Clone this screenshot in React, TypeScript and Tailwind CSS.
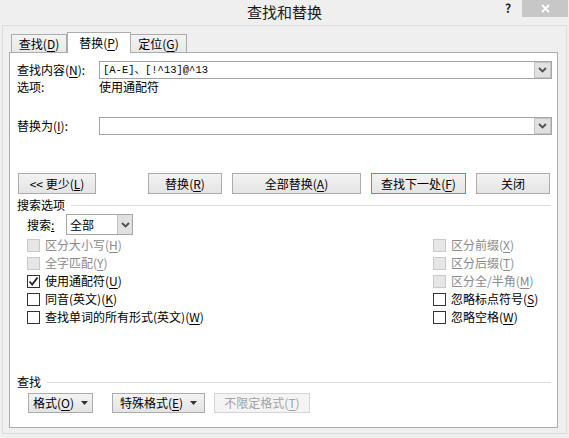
import React from 'react';

const FONT = "font-['Noto_Sans_CJK_SC','Noto_Sans',sans-serif]";

function Acc({ pre, k, post = '' }: { pre: string; k: string; post?: string }) {
  return (
    <span>
      {pre}(<u className="underline-offset-2">{k}</u>){post}
    </span>
  );
}

function Chevron() {
  return (
    <svg width="9" height="6" viewBox="0 0 9 6">
      <path d="M1 1 L4.5 4.5 L8 1" fill="none" stroke="#505050" strokeWidth="1.8" />
    </svg>
  );
}

function Caret() {
  return (
    <svg width="7" height="4" viewBox="0 0 7 4" className="ml-[7px]">
      <path d="M0 0 H7 L3.5 4 Z" fill="#333" />
    </svg>
  );
}

function Btn({
  w,
  className = '',
  children,
  primary,
  disabled,
}: {
  w: string;
  className?: string;
  children: React.ReactNode;
  primary?: boolean;
  disabled?: boolean;
}) {
  return (
    <div
      className={[
        'h-full flex items-center justify-center border shrink-0 leading-none',
        w,
        className,
        disabled
          ? 'bg-[#f4f4f4] border-[#d5d5d5] text-[#a2a2a2]'
          : 'bg-gradient-to-b from-[#f3f3f3] to-[#e4e4e4] text-black',
        !disabled && (primary ? 'border-[#3c9bf0]' : 'border-[#acacac]'),
      ].join(' ')}
    >
      {children}
    </div>
  );
}

function Combo({ text, mono }: { text?: string; mono?: boolean }) {
  return (
    <div className="flex-1 h-[18px] border border-[#a5a5a5] bg-white flex items-center">
      <span
        className={
          'flex-1 pl-[3px] leading-none ' +
          (mono ? "font-['Liberation_Mono','Noto_Sans_CJK_SC',monospace] text-[10.5px]" : '')
        }
      >
        {text}
      </span>
      <div className="w-[17px] h-[16px] bg-[#e1e1e1] border border-[#c4c4c4] flex items-center justify-center">
        <Chevron />
      </div>
    </div>
  );
}

function Check({
  label,
  checked,
  disabled,
}: {
  label: React.ReactNode;
  checked?: boolean;
  disabled?: boolean;
}) {
  return (
    <div className="h-[18px] flex items-center">
      <div
        className={[
          'w-[13px] h-[13px] border flex items-center justify-center shrink-0',
          disabled ? 'bg-[#e6e6e6] border-[#c9c9c9]' : 'bg-white border-[#333333]',
        ].join(' ')}
      >
        {checked && (
          <svg width="11" height="11" viewBox="0 0 11 11">
            <path d="M1.5 5.5 L4.2 8.5 L9.5 1.5" fill="none" stroke="#222" strokeWidth="1.8" />
          </svg>
        )}
      </div>
      <span className={'ml-[5px] leading-none ' + (disabled ? 'text-[#8a8a8a]' : 'text-black')}>
        {label}
      </span>
    </div>
  );
}

function GroupHeader({ title }: { title: string }) {
  return (
    <div className="h-[16px] flex items-center">
      <span className="leading-none">{title}</span>
      <div className="flex-1 h-px bg-[#dcdcdc] ml-[6px] mr-[1px]" />
    </div>
  );
}

export default function App() {
  return (
    <div className={`w-[569px] h-[438px] bg-[#efefef] flex flex-col text-[12px] text-black ${FONT}`}>
      {/* Title bar */}
      <div className="h-[25px] shrink-0 relative flex items-center justify-center">
        <span className="text-[15px] leading-none text-[#1a1a1a] mt-[-2px]">查找和替换</span>
        <span className="absolute left-[505px] top-[2px] text-[12px] font-bold text-[#222] leading-none">?</span>
        <div className="absolute left-[522px] top-0 w-[46px] h-[17px] bg-[#c7c7c7] flex items-center justify-center">
          <svg width="9" height="9" viewBox="0 0 9 9">
            <path d="M1 1 L8 8 M8 1 L1 8" stroke="#fff" strokeWidth="1.8" />
          </svg>
        </div>
      </div>

      {/* Window body */}
      <div className="ml-[2px] w-[565px] h-[409px] border border-[#dcdcdc] pl-[6px] pt-[6px]">
        {/* Tabs */}
        <div className="h-[20px] flex items-end pl-[2px]">
          <div className="w-[56px] h-[18px] border border-b-0 border-[#acacac] bg-gradient-to-b from-[#f3f3f3] to-[#e8e8e8] flex items-center justify-center leading-none">
            <Acc pre="查找" k="D" />
          </div>
          <div className="relative z-10 w-[64px] h-[21px] mb-[-1px] border border-b-0 border-[#acacac] bg-white flex items-center justify-center leading-none">
            <Acc pre="替换" k="P" />
          </div>
          <div className="w-[56px] h-[18px] border border-b-0 border-l-0 border-[#acacac] bg-gradient-to-b from-[#f3f3f3] to-[#e8e8e8] flex items-center justify-center leading-none">
            <Acc pre="定位" k="G" />
          </div>
        </div>

        {/* Panel */}
        <div className="w-[549px] h-[376px] border border-[#acacac] bg-white pl-[7px] pr-[5px] flex flex-col">
          <div className="mt-[8px] h-[18px] flex items-center">
            <span className="w-[82px] shrink-0 leading-none">
              <Acc pre="查找内容" k="N" post=":" />
            </span>
            <Combo text="[A-E]、[!^13]@^13" mono />
          </div>
          <div className="h-[16px] flex items-center">
            <span className="w-[82px] shrink-0 leading-none">选项:</span>
            <span className="leading-none">使用通配符</span>
          </div>
          <div className="mt-[22px] h-[18px] flex items-center">
            <span className="w-[82px] shrink-0 leading-none">
              <Acc pre="替换为" k="I" post=":" />
            </span>
            <Combo />
          </div>

          {/* Buttons */}
          <div className="mt-[38px] h-[21px] flex">
            <Btn w="w-[78px]" className="ml-[1px]">
              <span>
                &lt;&lt; 更少(<u>L</u>)
              </span>
            </Btn>
            <Btn w="w-[74px]" className="ml-[52px]">
              <Acc pre="替换" k="R" />
            </Btn>
            <Btn w="w-[129px]" className="ml-[10px]">
              <Acc pre="全部替换" k="A" />
            </Btn>
            <Btn w="w-[95px]" className="ml-[10px]" primary>
              <Acc pre="查找下一处" k="F" />
            </Btn>
            <Btn w="w-[74px]" className="ml-[10px]">
              关闭
            </Btn>
          </div>

          <div className="mt-[3px]">
            <GroupHeader title="搜索选项" />
          </div>

          <div className="mt-[1px] h-[21px] flex items-center pl-[10px]">
            <span className="w-[39px] shrink-0 leading-none">
              搜索<u>:</u>
            </span>
            <div className="w-[67px] h-[21px] border border-[#a5a5a5] bg-white flex items-center">
              <span className="flex-1 pl-[3px] leading-none">全部</span>
              <div className="w-[15px] h-[19px] bg-[#e1e1e1] border-l border-[#c4c4c4] flex items-center justify-center">
                <Chevron />
              </div>
            </div>
          </div>

          {/* Options */}
          <div className="mt-[1px] pl-[10px] flex">
            <div className="w-[406px] flex flex-col">
              <Check disabled label={<Acc pre="区分大小写" k="H" />} />
              <Check disabled label={<Acc pre="全字匹配" k="Y" />} />
              <Check checked label={<Acc pre="使用通配符" k="U" />} />
              <Check label={<Acc pre="同音(英文)" k="K" />} />
              <Check label={<Acc pre="查找单词的所有形式(英文)" k="W" />} />
            </div>
            <div className="flex flex-col">
              <Check disabled label={<Acc pre="区分前缀" k="X" />} />
              <Check disabled label={<Acc pre="区分后缀" k="T" />} />
              <Check disabled label={<Acc pre="区分全/半角" k="M" />} />
              <Check label={<Acc pre="忽略标点符号" k="S" />} />
              <Check label={<Acc pre="忽略空格" k="W" />} />
            </div>
          </div>

          <div className="mt-[48px]">
            <GroupHeader title="查找" />
          </div>
          <div className="mt-[3px] h-[20px] flex">
            <Btn w="w-[65px]" className="ml-[11px]">
              <Acc pre="格式" k="O" />
              <Caret />
            </Btn>
            <Btn w="w-[93px]" className="ml-[19px]">
              <Acc pre="特殊格式" k="E" />
              <Caret />
            </Btn>
            <Btn w="w-[96px]" className="ml-[9px]" disabled>
              <Acc pre="不限定格式" k="T" />
            </Btn>
          </div>
        </div>
      </div>
    </div>
  );
}
